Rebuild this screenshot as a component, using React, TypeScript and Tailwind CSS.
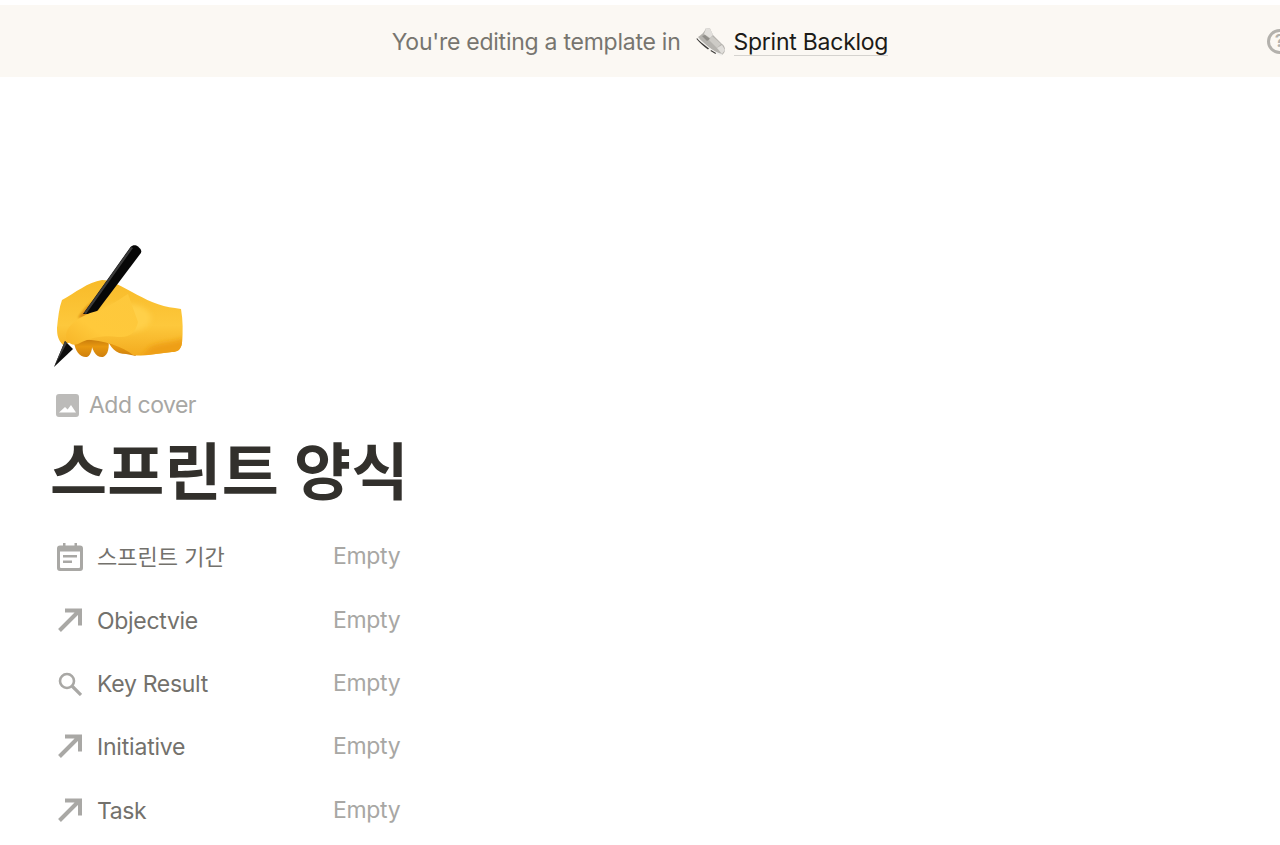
const handPath =
  "M62 300 C75 293 88 282 102 280 C112 280 122 287 132 292 C145 299 160 307 175 308 L181 309 C183 320 183 332 182 343 C181 350 177 352 172 352 C158 353 146 357 133 355 C122 346 100 338 76 340 L63 345 C58 340 57 335 57 328 C58 318 59 308 62 300 Z";

function WritingHand() {
  return (
    <svg width="135" height="127" viewBox="50 243 135 127" className="block">
      <defs>
        <linearGradient id="hand" x1="0" y1="0" x2="0" y2="1">
          <stop offset="0" stopColor="#f8bb29" />
          <stop offset="0.6" stopColor="#fdc83c" />
          <stop offset="1" stopColor="#f3ab1f" />
        </linearGradient>
        <linearGradient id="finger" x1="0" y1="0" x2="0" y2="1">
          <stop offset="0" stopColor="#b96f0b" />
          <stop offset="0.5" stopColor="#e8980f" />
          <stop offset="1" stopColor="#cf800e" />
        </linearGradient>
        <linearGradient id="thumb" x1="0" y1="1" x2="1" y2="0">
          <stop offset="0" stopColor="#f7b528" />
          <stop offset="0.35" stopColor="#ffc93b" />
          <stop offset="1" stopColor="#fdc83c" />
        </linearGradient>
        <filter id="soft" x="-30%" y="-30%" width="160%" height="160%">
          <feGaussianBlur stdDeviation="2.5" />
        </filter>
        <filter id="softer" x="-30%" y="-30%" width="160%" height="160%">
          <feGaussianBlur stdDeviation="1" />
        </filter>
        <clipPath id="handClip">
          <path d={handPath} />
        </clipPath>
      </defs>
      <path d="M74 342 C75 352 81 358 87 357 C92 355 93 346 92 336 Z" fill="url(#finger)" />
      <path d="M90 336 C91 350 96 358 103 357 C108 355 110 348 108 336 Z" fill="url(#finger)" />
      <path d="M106 336 C110 348 116 354 126 354 L136 356 L130 345 L122 336 Z" fill="url(#finger)" />
      <path d={handPath} fill="url(#hand)" />
      <g clipPath="url(#handClip)">
        <ellipse cx="125" cy="318" rx="26" ry="14" fill="#ffd04a" filter="url(#soft)" />
        <path d="M150 347 C160 342 172 343 186 338 L186 356 L140 358 Z" fill="#ee9f15" filter="url(#soft)" />
        <path d="M78 318 C84 308 92 300 102 296 L96 316 Z" fill="#d98c12" filter="url(#softer)" />
      </g>
      <path d="M130.5 247 C133 244.5 136 245 138 246.5 L140.5 249 C141.5 250.5 141.5 252 140.5 253.5 L95 314 L83 314 Z" fill="#070707" />
      <path d="M131 247 L84 313 L86 314 L133 248 Z" fill="#3c3c3c" />
      <path d="M128 294 C118 300 106 309 97 311 C88 313 78 318 71 325 C66 330 65 336 67 340 C70 345 75 346 80 343 C90 338 104 335 118 337 C130 338 136 332 138 322 Z" fill="url(#thumb)" />
      <path d="M65 341 L73 349 L54 367 Z" fill="#0d0d0d" />
      <path d="M65 341 L67 343 L54 367 Z" fill="#3f3f3f" />
    </svg>
  );
}

function Shoe() {
  return (
    <svg width="30" height="32" viewBox="0 0 30 32" className="block">
      <path d="M2 11 C5 9 8 7 10 2 L14 2.5 L17 9 L26 18 C29 20 30 24 28 27 L26 29 C18 26 8 18 2 11 Z" fill="#b5b3ae" />
      <path d="M10 2 L14 2.5 L17 9 L14 12 L8 8 C9 6 9.5 4 10 2 Z" fill="#e2e0dc" />
      <path d="M9 9 L14 13 L11 15 L6 10 Z" fill="#8f8d88" />
      <path d="M16 10 L25 18 L21 22 L13 14 Z" fill="#cdcbc6" />
      <path d="M2 12 C9 19 18 26 26 28 L25.5 30 C17 27 8 20 1.5 13.5 Z" fill="#f2f1ee" />
      <path d="M1 12 C2 13.5 4 15.5 6 17 L13 22.5 L12 23.5 C8 20.5 4 17 0.5 13 Z M15 24 L20 27 L19.5 28 L14.5 25 Z" fill="#3a3835" />
      <path d="M21 22 L26 19 L29 24 L26 28 Z" fill="#e0deda" />
    </svg>
  );
}

function ImageIcon() {
  return (
    <svg width="23" height="23" viewBox="0 0 23 23" className="block">
      <path fillRule="evenodd" d="M3 0 H20 A3 3 0 0 1 23 3 V20 A3 3 0 0 1 20 23 H3 A3 3 0 0 1 0 20 V3 A3 3 0 0 1 3 0 Z M3 18.5 H20 L15 11 L11.6 15.5 L9 13 Z" fill="#bcbbb9" />
    </svg>
  );
}

function CalendarIcon() {
  return (
    <svg width="26" height="28" viewBox="0 0 26 28" className="block">
      <path fillRule="evenodd" d="M6 0 H8.5 V2.5 H17.5 V0 H20 V2.5 H23 A3 3 0 0 1 26 5.5 V25 A3 3 0 0 1 23 28 H3 A3 3 0 0 1 0 25 V5.5 A3 3 0 0 1 3 2.5 H6 Z M3 8.5 V24 A1 1 0 0 0 4 25 H22 A1 1 0 0 0 23 24 V8.5 Z M6 12 H20 V14.5 H6 Z M6 17.5 H15 V20 H6 Z" fill="#a9a8a5" />
    </svg>
  );
}

function ArrowIcon() {
  return (
    <svg width="24" height="24" viewBox="0 0 24 24" className="-mt-[3px] block">
      <path d="M1.5 22.5 L21 3 M7 2.5 H22 V17.5" stroke="#a9a8a5" strokeWidth="4" fill="none" />
    </svg>
  );
}

function SearchIcon() {
  return (
    <svg width="24" height="24" viewBox="0 0 24 24" className="-mt-[2px] block">
      <circle cx="9" cy="9" r="7" stroke="#a9a8a5" strokeWidth="2.6" fill="none" />
      <path d="M14 14 L23 23" stroke="#a9a8a5" strokeWidth="3.2" fill="none" />
    </svg>
  );
}

const rows = [
  { icon: <CalendarIcon />, name: "스프린트 기간", cls: "h-[64px]", nameCls: "text-[22px] tracking-normal" },
  { icon: <ArrowIcon />, name: "Objectvie", cls: "h-[64px]", nameCls: "text-[23px] tracking-[-0.3px]" },
  { icon: <SearchIcon />, name: "Key Result", cls: "h-[63px]", nameCls: "text-[23px] tracking-[-0.3px]" },
  { icon: <ArrowIcon />, name: "Initiative", cls: "h-[62px]", nameCls: "text-[23px] tracking-[-0.2px]" },
  { icon: <ArrowIcon />, name: "Task", cls: "h-[66px]", nameCls: "text-[23px] tracking-[-0.4px]" },
];

export default function App() {
  return (
    <div className="h-[845px] overflow-hidden bg-white pt-[5px] font-['Inter','Noto_Sans_CJK_KR',sans-serif]">
      <div className="relative flex h-[72px] items-center justify-center bg-[#fbf8f3] pt-[2px]">
        <span className="text-[23px] tracking-[-0.25px] text-[#77756f]">You're editing a template in</span>
        <span className="ml-[15px] mr-[8px]"><Shoe /></span>
        <span className="border-b border-[#d5d3cf] text-[23px] leading-[26px] tracking-[-0.25px] text-[#1c1b18]">Sprint Backlog</span>
        <span className="absolute left-[1267px] top-[24px] flex h-[25px] w-[25px] items-center justify-center rounded-full border-[3px] border-[#b3b1ac] text-[17px] font-bold text-[#b3b1ac]">?</span>
      </div>

      <div className="pl-[50px] pt-[166px]">
        <WritingHand />
        <div className="ml-[6px] mt-[24px] flex h-[23px] items-center gap-[10px]">
          <ImageIcon />
          <span className="text-[23px] tracking-[-0.5px] text-[#a8a7a4]">Add cover</span>
        </div>
        <h1 className="mt-[18px] h-[76px] text-[62px] font-bold leading-[76px] tracking-[0.25px] text-[#32302c]">스프린트 양식</h1>

        <div className="mt-[14px] w-[360px]">
          {rows.map((row) => (
            <div key={row.name} className={`flex items-center ${row.cls}`}>
              <span className="ml-[7px] flex w-[26px] justify-center">{row.icon}</span>
              <span className={`ml-[14px] w-[236px] text-[#73716c] ${row.nameCls}`}>{row.name}</span>
              <span className="-mt-[2px] text-[23px] tracking-[-0.35px] text-[#a8a7a4]">Empty</span>
            </div>
          ))}
        </div>
      </div>
    </div>
  );
}
